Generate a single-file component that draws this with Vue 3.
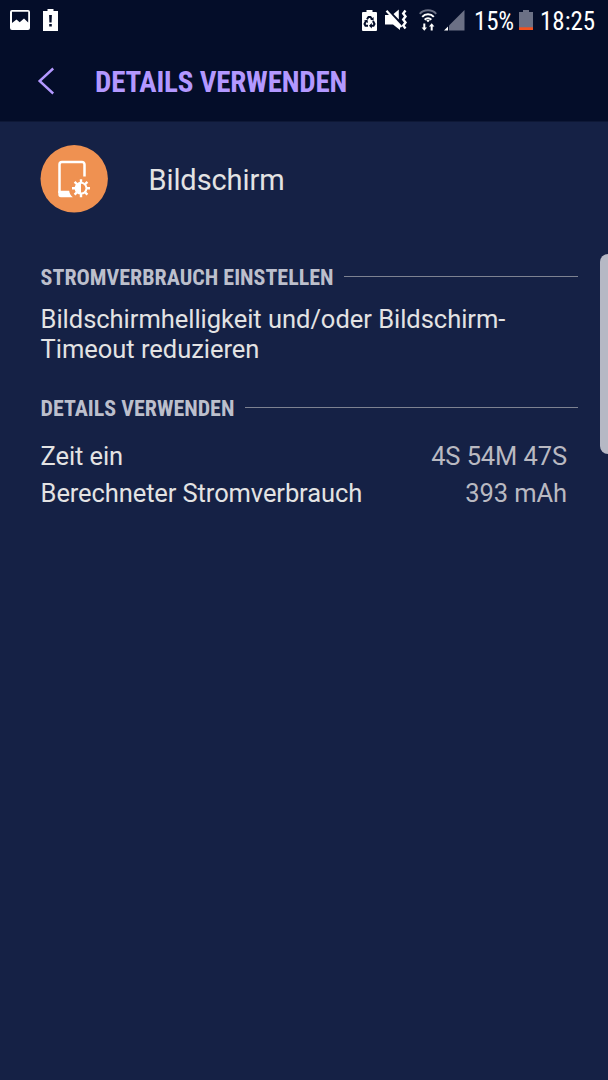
<template>
  <div class="screen">
    <header class="top">
      <div class="statusbar">
        <div class="status-left">
          <svg class="icon-image" viewBox="0 0 20 20" width="20" height="20">
            <path fill="#fff" fill-rule="evenodd" d="M2 0h16a2 2 0 0 1 2 2v16a2 2 0 0 1-2 2H2a2 2 0 0 1-2-2V2a2 2 0 0 1 2-2zM2 1.700V13l4.500-3.500 3.200 2.800L14 8.500l4.200 4V1.700z" />
          </svg>
          <svg class="icon-alert" viewBox="0 0 15 22" width="15" height="22">
            <path fill="#fff" fill-rule="evenodd" d="M4.500 0h6v2H15v20H0V2h4.500zM6.100 6l.3 7.500h2.200l.3-7.500zM6.200 15v2.500h2.600V15z" />
          </svg>
        </div>
        <div class="status-right">
          <svg class="icon-saver" viewBox="0 0 15 21" width="15" height="21">
            <path fill="#fff" d="M4.500 0h6v2H14a1 1 0 0 1 1 1v17a1 1 0 0 1-1 1H1a1 1 0 0 1-1-1V3a1 1 0 0 1 1-1h3.500z" />
            <g fill="none" stroke="#050e2a" stroke-width="2">
              <path d="M5 9.200 6.500 7h2L10 9.200M4 11l-1.500 3 1 1.800H6M11 11l1.500 3-1 1.800H8.500" />
            </g>
            <path fill="#050e2a" d="M8.300 9.700 11.600 7v3.500zM2 10.500l3.500-.7.500 3.200zM9.800 13v5.500L7 15.800z" />
          </svg>
          <svg class="icon-mute" viewBox="0 0 23 22" width="23" height="22">
            <path fill="#fff" d="M0 6h5l10 9.800V21l-7-5.500H0zM8.500 5 13.800.5v10z" />
            <path fill="none" stroke="#fff" stroke-width="2.200" d="M1.500 1.800 16.500 18" />
            <path fill="none" stroke="#fff" stroke-width="2.400" d="m20.500 1.500-2.300 3 2.300 3-2.300 3 2.300 3-2.300 3 2.300 3" />
          </svg>
          <svg class="icon-wifi" viewBox="0 0 18 22" width="18" height="22">
            <g fill="none" stroke-width="2">
              <path stroke="#6b7085" d="M.8 4.800C5 .2 13 .2 17.200 4.800" />
              <path stroke="#fff" d="M3.200 7.800c3-3.400 8.600-3.400 11.600 0M5.700 10.700c1.800-1.900 4.800-1.900 6.600 0" />
            </g>
            <path fill="#fff" d="m9 13.300-1.800-1.700c1-1 2.600-1 3.600 0zM4.300 14.500h2v4H8l-2.700 3.200-2.700-3.200h1.700zM11.700 21.500h2v-4h1.700l-2.700-3.200L10 17.500h1.700z" />
          </svg>
          <svg class="icon-signal" viewBox="0 0 21 21" width="21" height="21">
            <path fill="#6b7085" d="M20.500 0v20.500H5v-5z" />
            <path fill="#fff" d="M4 16.500v4H0z" />
          </svg>
          <span class="percent">15%</span>
          <svg class="icon-battery" viewBox="0 0 14 20" width="14" height="20">
            <path fill="#6b7085" d="M4 0h6v2h4v18H0V2h4z" />
            <path fill="#f4511e" d="M0 17.300h14V20H0z" />
          </svg>
          <span class="clock">18:25</span>
        </div>
      </div>
      <div class="titlebar">
        <svg class="back" viewBox="0 0 18 28" width="18" height="28">
          <path fill="none" stroke="#b398ff" stroke-width="2.400" d="M16.200 1.500 2.600 14l13.600 12.500" />
        </svg>
        <h1 class="title">DETAILS VERWENDEN</h1>
      </div>
    </header>

    <main class="content">
      <div class="app-row">
        <svg class="app-icon" viewBox="0 0 68 68" width="68" height="68">
          <circle cx="34.200" cy="33.800" r="33.700" fill="#ef9151" />
          <path fill="none" stroke="#fff" stroke-width="2.500" d="M19.500 48V19.500A2.500 2.500 0 0 1 22 17h20a2.500 2.500 0 0 1 2.500 2.500V31.500" />
          <path fill="#fff" d="M18.300 45.800h10.900c.2 2.500 1.400 4.700 3.600 6.500H21a2.700 2.700 0 0 1-2.700-2.700z" />
          <g transform="translate(41 43.200)">
            <path fill="none" stroke="#fff" stroke-width="2.400" d="M0-9V9M-9 0H9M-6.400-6.400 6.400 6.400M6.400-6.400-6.400 6.400" />
            <circle r="6.400" fill="#fff" />
            <path fill="#ef9151" d="M0-4.400a4.400 4.400 0 0 1 0 8.800z" />
          </g>
        </svg>
        <h2 class="app-name">Bildschirm</h2>
      </div>

      <section>
        <h3 class="section-title first"><span>STROMVERBRAUCH EINSTELLEN</span></h3>
        <p class="hint">Bildschirmhelligkeit und/oder Bildschirm-<br />Timeout reduzieren</p>
      </section>

      <section>
        <h3 class="section-title second"><span>DETAILS VERWENDEN</span></h3>
        <dl class="details">
          <div v-for="item in details" :key="item.label" class="detail">
            <dt>{{ item.label }}</dt>
            <dd>{{ item.value }}</dd>
          </div>
        </dl>
      </section>
    </main>

    <div class="edge-handle"></div>
  </div>
</template>

<script setup>
const details = [
  { label: 'Zeit ein', value: '4S 54M 47S' },
  { label: 'Berechneter Stromverbrauch', value: '393 mAh' }
]
</script>

<style>
body {
  margin: 0;
  background: #152145;
}
</style>

<style scoped>
.screen {
  position: relative;
  height: 1080px;
  overflow: hidden;
  background: #152145;
  color: #e3e3e3;
  font-family: Roboto, "Liberation Sans", sans-serif;
}
h1, h2, h3, p, dl, dd {
  margin: 0;
  font-weight: 400;
}
svg {
  display: block;
  flex: none;
}
.top {
  height: 121px;
  background: #040d29;
  border-bottom: 1px solid #0e1836;
}
.statusbar {
  display: flex;
  justify-content: space-between;
  height: 40px;
  padding: 0 12px 0 10px;
}
.status-left,
.status-right {
  display: flex;
  align-items: center;
}
.icon-alert {
  margin-left: 13px;
}
.icon-mute {
  margin-left: 8px;
}
.icon-wifi {
  margin-left: 11px;
}
.icon-signal {
  margin-left: 7px;
}
.percent,
.clock {
  padding-top: 2px;
  font-family: "Roboto Condensed", Roboto, sans-serif;
  font-stretch: condensed;
  font-size: 25px;
  color: #fff;
  white-space: nowrap;
}
.percent {
  width: 40px;
  margin-left: 9px;
  letter-spacing: -0.2px;
}
.icon-battery {
  margin-left: 5px;
}
.clock {
  width: 56px;
  margin-left: 7px;
}
.titlebar {
  display: flex;
  align-items: center;
  height: 82px;
  padding-left: 37px;
}
.title {
  padding-top: 1px;
  margin-left: 40px;
  font-family: "Roboto Condensed", Roboto, sans-serif;
  font-stretch: condensed;
  font-weight: 700;
  font-size: 29px;
  line-height: 34px;
  letter-spacing: -0.2px;
  color: #b398ff;
  white-space: nowrap;
}
.content {
  padding: 23px 30px 0 40px;
}
.app-row {
  display: flex;
  align-items: center;
  height: 68px;
}
.app-name {
  padding-top: 2px;
  margin-left: 40.500px;
  font-size: 29px;
  line-height: 34px;
  letter-spacing: -0.1px;
}
.section-title {
  display: flex;
  align-items: center;
  gap: 11px;
  padding-left: 0.600px;
  font-family: "Roboto Condensed", Roboto, sans-serif;
  font-stretch: condensed;
  font-weight: 700;
  font-size: 22px;
  line-height: 26px;
  color: #bcbfcc;
  white-space: nowrap;
}
.section-title::after {
  content: "";
  flex: 1;
  height: 1px;
  margin-bottom: 3px;
  background: #7d8291;
}
.first {
  margin-top: 52px;
}
.second {
  margin-top: 32px;
}
.hint {
  margin-top: 13px;
  padding-left: 0.600px;
  font-size: 25.500px;
  line-height: 30px;
  letter-spacing: -0.030px;
  white-space: nowrap;
}
.details {
  margin-top: 16px;
  padding: 0 11px 0 0.600px;
}
.detail {
  display: flex;
  justify-content: space-between;
  height: 37px;
  font-size: 25.500px;
  line-height: 37px;
  letter-spacing: -0.1px;
}
.detail dd {
  color: #b9b9c1;
}
.edge-handle {
  position: absolute;
  top: 254px;
  right: 0;
  width: 8px;
  height: 200px;
  border-radius: 8px 0 0 8px;
  background: #b6b8c4;
}
</style>
